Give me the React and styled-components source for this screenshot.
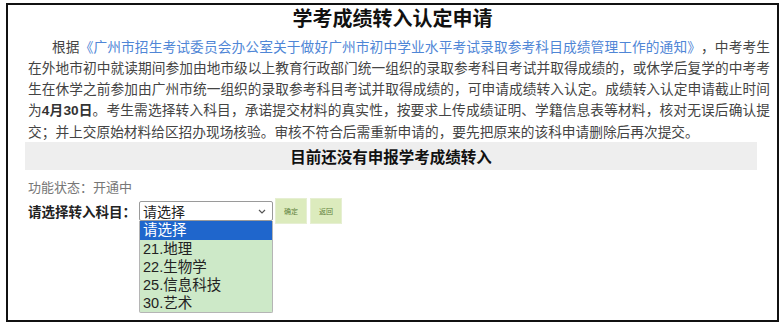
import React from "react";
import styled, { createGlobalStyle } from "styled-components";

const GlobalStyle = createGlobalStyle`
  html, body {
    margin: 0;
    padding: 0;
    background: #ffffff;
  }
  body {
    font-family: "Liberation Sans", "Noto Sans CJK SC", sans-serif;
  }
`;

const Frame = styled.div`
  box-sizing: border-box;
  width: 773px;
  height: 319px;
  margin: 3px 0 0 6px;
  border: 2px solid #111;
  display: flex;
  flex-direction: column;
`;

const Title = styled.h1`
  margin: 0;
  font-family: "Noto Sans CJK SC", sans-serif;
  font-size: 20px;
  line-height: 26px;
  font-weight: 700;
  color: #111;
  text-align: center;
`;

const Notice = styled.p`
  margin: 5px 0 0 20px;
  width: 742px;
  font-family: "Noto Sans CJK SC", sans-serif;
  font-size: 13.7px;
  line-height: 21px;
  color: #444;
  text-align: justify;
  text-indent: 24px;
  text-spacing-trim: space-all;
`;

const DocLink = styled.a`
  color: #4f86d6;
  text-decoration: none;
`;

const Date = styled.b`
  font-family: "Liberation Sans", "Noto Sans CJK SC", sans-serif;
  color: #333;
`;

const StatusBar = styled.div`
  margin: 0 20px 0 17px;
  height: 28px;
  background: #eeeeee;
  display: flex;
  align-items: center;
  justify-content: center;
  font-family: "Noto Sans CJK SC", sans-serif;
  font-weight: 700;
  font-size: 15.5px;
  color: #111;
`;

const Status = styled.div`
  margin: 8px 0 0 20px;
  font-family: "Noto Sans CJK SC", sans-serif;
  font-size: 13px;
  line-height: 18px;
  color: #777;
`;

const FormRow = styled.div`
  margin: 2px 0 0 20px;
  display: flex;
  align-items: center;
  height: 26px;
`;

const Label = styled.span`
  width: 111px;
  font-family: "Noto Sans CJK SC", sans-serif;
  font-size: 13.5px;
  font-weight: 700;
  color: #222;
`;

const SelectWrap = styled.div`
  position: relative;
  width: 134px;
  height: 20px;
`;

const SelectBox = styled.div`
  box-sizing: border-box;
  height: 20px;
  border: 1px solid #9a9a9a;
  border-radius: 2px;
  background: #fff;
  display: flex;
  align-items: center;
  justify-content: space-between;
  padding: 0 6px 0 3px;
  font-size: 14px;
  color: #222;
`;

const OptionList = styled.ul`
  position: absolute;
  left: 0;
  top: 20px;
  width: 134px;
  box-sizing: border-box;
  margin: 0;
  padding: 0;
  list-style: none;
  background: #cde9c8;
  border: 1px solid #b5b5b5;
  border-top: none;
  border-radius: 0 0 2px 2px;
`;

const Option = styled.li`
  height: ${(p) => (p.$active ? 19 : 18)}px;
  line-height: ${(p) => (p.$active ? 19 : 18)}px;
  padding-left: 3px;
  font-size: 14.5px;
  background: ${(p) => (p.$active ? "#1f66cc" : "transparent")};
  color: ${(p) => (p.$active ? "#fff" : "#222")};
`;

const SmallButton = styled.button`
  box-sizing: border-box;
  width: 32px;
  height: 26px;
  margin-left: ${(p) => p.$gap}px;
  padding: 0;
  border: 1px solid #e6efd2;
  background: #dcebbd;
  font-family: "Noto Sans CJK SC", sans-serif;
  font-size: 7px;
  color: #5e7f3a;
`;

const options = ["请选择", "21.地理", "22.生物学", "25.信息科技", "30.艺术"];

export default function App() {
  return (
    <>
      <GlobalStyle />
      <Frame>
        <Title>学考成绩转入认定申请</Title>
        <Notice>
          根据<DocLink href="#">《广州市招生考试委员会办公室关于做好广州市初中学业水平考试录取参考科目成绩管理工作的通知》</DocLink>，中考考生在外地市初中就读期间参加由地市级以上教育行政部门统一组织的录取参考科目考试并取得成绩的，或休学后复学的中考考生在休学之前参加由广州市统一组织的录取参考科目考试并取得成绩的，可申请成绩转入认定。成绩转入认定申请截止时间为<Date>4月30日</Date>。考生需选择转入科目，承诺提交材料的真实性，按要求上传成绩证明、学籍信息表等材料，核对无误后确认提交；并上交原始材料给区招办现场核验。审核不符合后需重新申请的，要先把原来的该科申请删除后再次提交。
        </Notice>
        <StatusBar>目前还没有申报学考成绩转入</StatusBar>
        <Status>功能状态：开通中</Status>
        <FormRow>
          <Label>请选择转入科目：</Label>
          <SelectWrap>
            <SelectBox>
              <span>请选择</span>
              <svg width="8" height="5" viewBox="0 0 8 5">
                <path d="M1 1l3 3 3-3" fill="none" stroke="#555" strokeWidth="1.2" />
              </svg>
            </SelectBox>
            <OptionList>
              {options.map((o, i) => (
                <Option key={o} $active={i === 0}>
                  {o}
                </Option>
              ))}
            </OptionList>
          </SelectWrap>
          <SmallButton $gap={2}>确定</SmallButton>
          <SmallButton $gap={3}>返回</SmallButton>
        </FormRow>
      </Frame>
    </>
  );
}
